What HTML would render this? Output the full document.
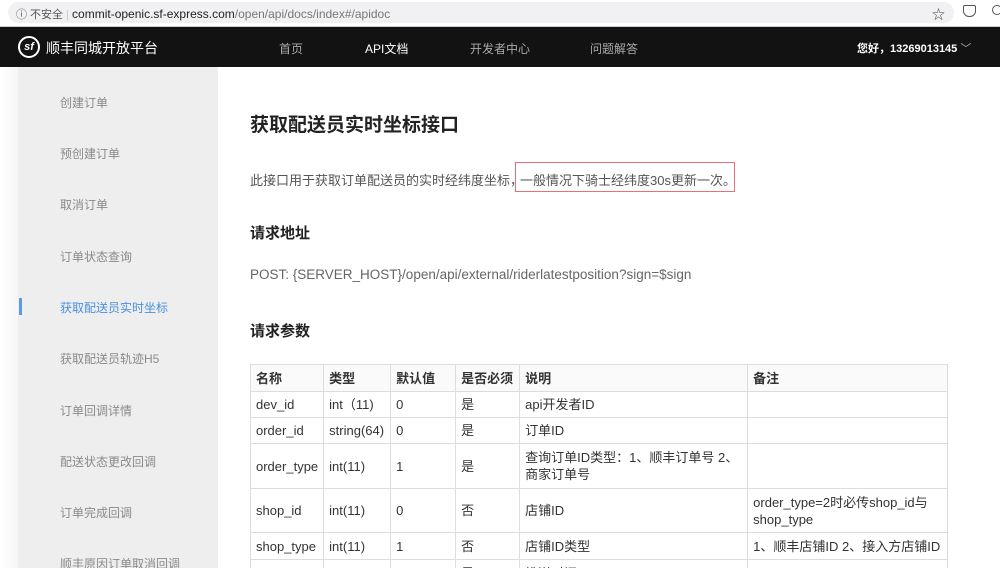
<!DOCTYPE html>
<html><head><meta charset="utf-8"><style>
*{margin:0;padding:0;box-sizing:border-box}
html,body{width:1000px;height:568px;overflow:hidden}
body{background:#fff;font-family:"Liberation Sans","Noto Sans CJK SC",sans-serif;position:relative}
.a{position:absolute;white-space:nowrap}
#chrome{position:absolute;left:0;top:0;width:1000px;height:26px;background:#fff}
#addr{position:absolute;left:8px;top:2px;width:946px;height:21px;background:#f1f1f3;border-radius:11px}
#nav{position:absolute;left:0;top:26px;width:1000px;height:41px;background:#121212;border-top:1px solid #ccc}
.n{color:#aaa;font-size:12px;top:13px}
#side{position:absolute;left:18px;top:67px;width:200px;height:501px;background:#eeeeee}
#lg{position:absolute;left:0;top:67px;width:18px;height:501px;background:linear-gradient(90deg,#fff,#f6f6f6)}
.s{left:60px;font-size:12px;color:#8a8a8a}
table{position:absolute;left:250px;top:364px;border-collapse:collapse;font-size:13px;color:#333}
td{border:1px solid #ddd;padding:0 5px;vertical-align:middle;line-height:17px}
tr:first-child td{font-weight:bold;background:#fafafa}
</style></head><body>
<div id="chrome"><div id="addr"></div>
<div class="a" style="left:16px;top:6px;font-size:11px;color:#555">ⓘ 不安全 <span style="color:#ccc">|</span> <span style="color:#222;font-size:12px">commit-openic.sf-express.com</span><span style="color:#777;font-size:12px">/open/api/docs/index#/apidoc</span></div>
<div class="a" style="left:932px;top:4px;font-size:13px;color:#444">☆</div>
<div class="a" style="left:963px;top:5px;width:13px;height:12px;border:1.5px solid #555;border-radius:2px 2px 6px 6px"></div>
<div class="a" style="left:992px;top:5px;width:10px;height:10px;border:1.5px solid #555;border-radius:50%"></div>
</div>
<div id="nav">
<div class="a" style="left:18px;top:9px;width:22px;height:22px;border:2px solid #fff;border-radius:50%;color:#fff;font-size:11px;font-weight:bold;text-align:center;line-height:18px;font-style:italic">sf</div>
<div class="a" style="left:46px;top:11px;color:#fff;font-size:14px">顺丰同城开放平台</div>
<div class="a n" style="left:279px">首页</div>
<div class="a n" style="left:365px;color:#fff">API文档</div>
<div class="a n" style="left:470px">开发者中心</div>
<div class="a n" style="left:590px">问题解答</div>
<div class="a" style="left:857px;top:13px;color:#fff;font-size:11px;font-weight:bold">您好，13269013145 <span style="color:#aaa;font-weight:normal">﹀</span></div>
</div>
<div id="lg"></div>
<div id="side"></div>
<div class="a s" style="top:94px">创建订单</div>
<div class="a s" style="top:145px">预创建订单</div>
<div class="a s" style="top:196px">取消订单</div>
<div class="a s" style="top:248px">订单状态查询</div>
<div class="a" style="left:19px;top:298px;width:3px;height:17px;background:#5b9be6"></div>
<div class="a s" style="top:299px;color:#4a90e2">获取配送员实时坐标</div>
<div class="a s" style="top:350px">获取配送员轨迹H5</div>
<div class="a s" style="top:402px">订单回调详情</div>
<div class="a s" style="top:453px">配送状态更改回调</div>
<div class="a s" style="top:504px">订单完成回调</div>
<div class="a s" style="top:555px">顺丰原因订单取消回调</div>
<div class="a" style="left:250px;top:110px;font-size:19px;font-weight:bold;color:#222">获取配送员实时坐标接口</div>
<div class="a" style="left:250px;top:170px;font-size:13px;color:#555">此接口用于获取订单配送员的实时经纬度坐标，</div>
<div class="a" style="left:515px;top:162px;width:220px;height:30px;border:1.5px solid #e57373"></div>
<div class="a" style="left:520px;top:170px;font-size:13px;color:#555">一般情况下骑士经纬度30s更新一次。</div>
<div class="a" style="left:250px;top:222px;font-size:15px;font-weight:bold;color:#222">请求地址</div>
<div class="a" style="left:250px;top:267px;font-size:13.5px;color:#666">POST: {SERVER_HOST}/open/api/external/riderlatestposition?sign=$sign</div>
<div class="a" style="left:250px;top:320px;font-size:15px;font-weight:bold;color:#222">请求参数</div>
<table>
<tr style="height:27px"><td style="width:73px">名称</td><td style="width:67px">类型</td><td style="width:65px">默认值</td><td style="width:64px">是否必须</td><td style="width:228px">说明</td><td style="width:200px">备注</td></tr>
<tr style="height:26px"><td>dev_id</td><td>int（11)</td><td>0</td><td>是</td><td>api开发者ID</td><td></td></tr>
<tr style="height:26px"><td>order_id</td><td>string(64)</td><td>0</td><td>是</td><td>订单ID</td><td></td></tr>
<tr style="height:45px"><td>order_type</td><td>int(11)</td><td>1</td><td>是</td><td>查询订单ID类型：1、顺丰订单号 2、<br>商家订单号</td><td></td></tr>
<tr style="height:44px"><td>shop_id</td><td>int(11)</td><td>0</td><td>否</td><td>店铺ID</td><td>order_type=2时必传shop_id与<br>shop_type</td></tr>
<tr style="height:27px"><td>shop_type</td><td>int(11)</td><td>1</td><td>否</td><td>店铺ID类型</td><td>1、顺丰店铺ID 2、接入方店铺ID</td></tr>
<tr style="height:27px"><td>push_time</td><td>int(11)</td><td>0</td><td>是</td><td>推送时间</td><td></td></tr>
</table>
</body></html>
